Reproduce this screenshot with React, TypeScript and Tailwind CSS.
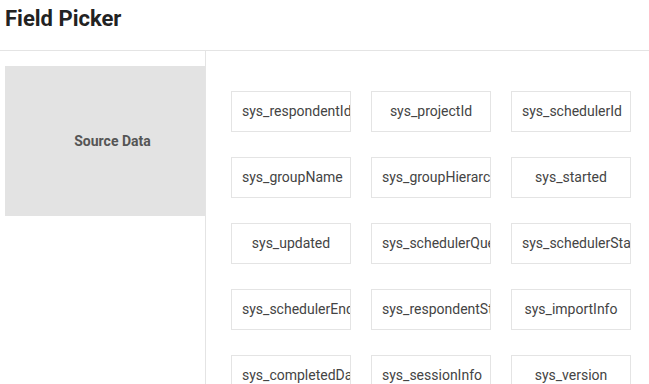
import React from "react";

const fields = [
  "sys_respondentId",
  "sys_projectId",
  "sys_schedulerId",
  "sys_groupName",
  "sys_groupHierarchy",
  "sys_started",
  "sys_updated",
  "sys_schedulerQueue",
  "sys_schedulerStatus",
  "sys_schedulerEnd",
  "sys_respondentStatus",
  "sys_importInfo",
  "sys_completedDate",
  "sys_sessionInfo",
  "sys_version",
];

export default function App() {
  return (
    <div
      className="h-screen w-full overflow-hidden bg-white flex flex-col"
      style={{ fontFamily: "Roboto, 'Liberation Sans', sans-serif" }}
    >
      <div className="h-[51px] shrink-0 border-b border-[#e4e4e4] px-[5px] pt-[5px]">
        <h1 className="text-[22px] leading-[28px] font-bold text-[#222]">Field Picker</h1>
      </div>
      <div className="flex flex-1 min-h-0">
        <div className="w-[206px] shrink-0 border-r border-[#e4e4e4] pt-[15px] pl-[5px]">
          <div className="w-[200px] h-[150px] bg-[#e3e3e3] flex items-center justify-center pl-[15px]">
            <span className="text-[14px] font-bold text-[#555]">Source Data</span>
          </div>
        </div>
        <div className="flex-1 pl-[25px] pt-[40px]">
          <div className="grid grid-cols-[repeat(3,120px)] gap-x-[20px] gap-y-[25px]">
            {fields.map((f) => (
              <div
                key={f}
                className="h-[41px] border border-[#e4e4e4] bg-white px-[10px] text-center whitespace-nowrap overflow-hidden text-[14px] leading-[39px] text-[#444]"
              >
                {f}
              </div>
            ))}
          </div>
        </div>
      </div>
    </div>
  );
}
